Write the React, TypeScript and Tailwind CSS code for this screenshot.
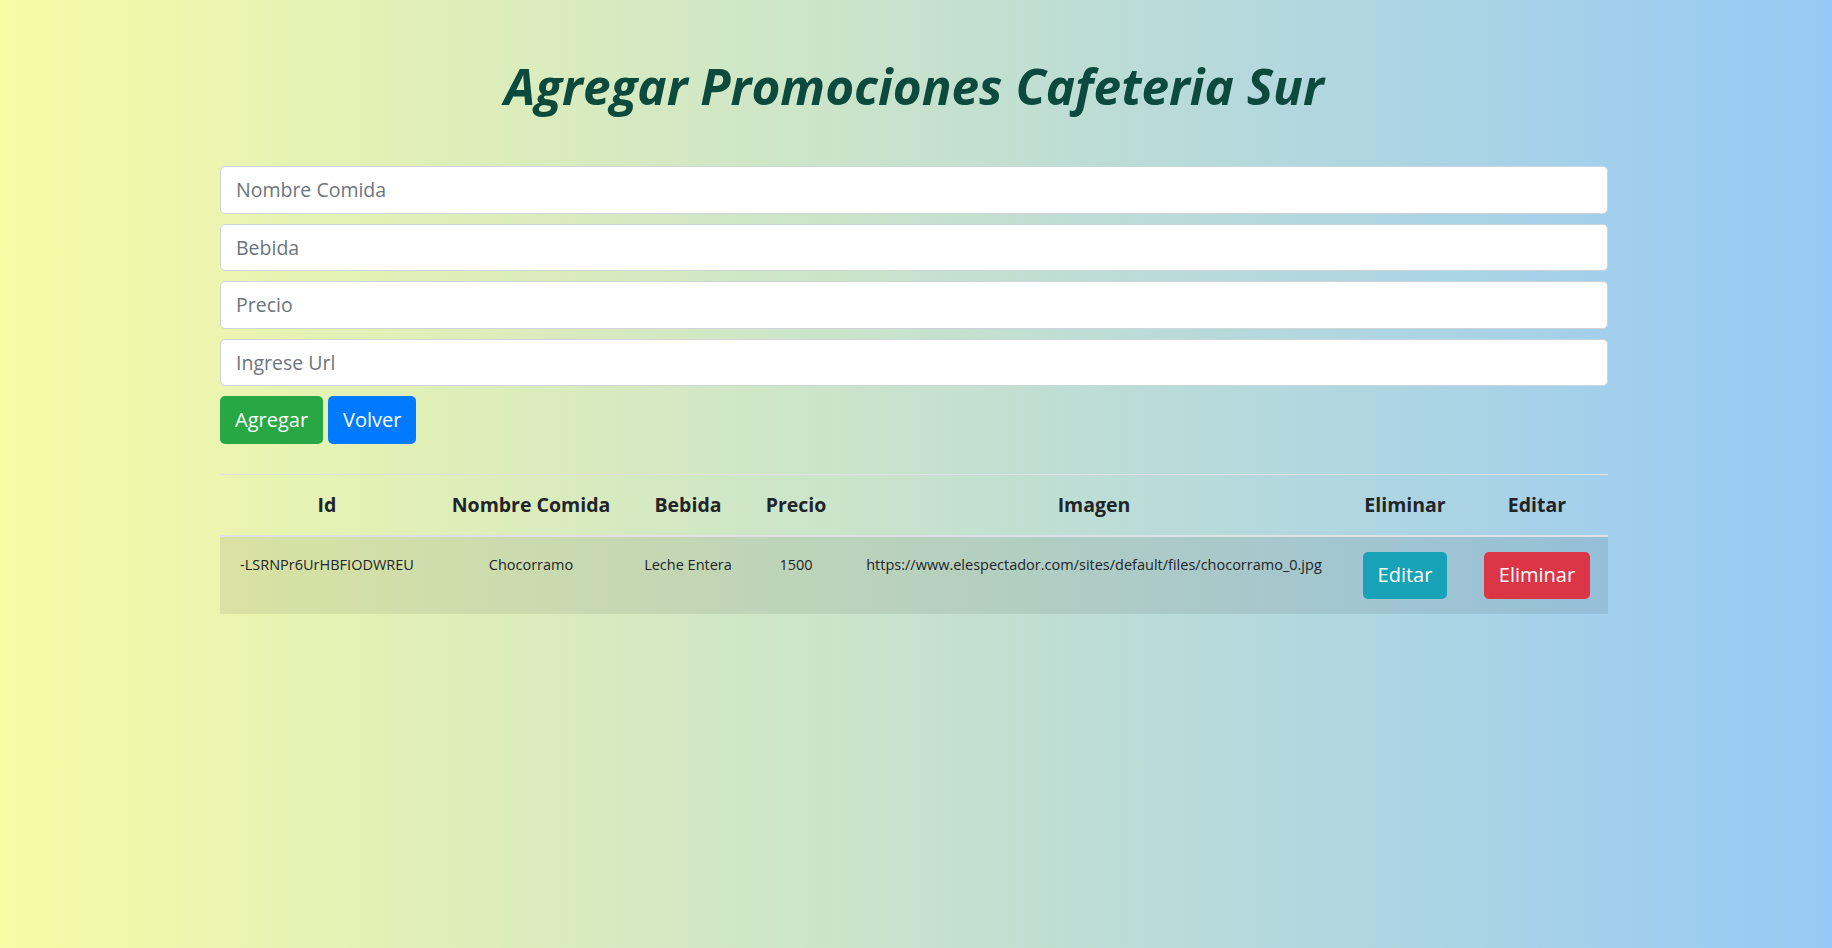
import React from "react";

const font = { fontFamily: '"Open Sans", "Noto Sans", sans-serif' };

export default function App() {
  const inputs = ["Nombre Comida", "Bebida", "Precio", "Ingrese Url"];
  return (
    <div
      className="min-h-[948px] w-full bg-[linear-gradient(to_right,#f7fba6,#96c9f5)] text-[#212529] font-['Open_Sans','Noto_Sans',sans-serif]"
      style={font}
    >
      <div className="ml-[220px] w-[1388px] pt-[56px]">
        <h1 className="h-[60px] text-center text-[49.5px] leading-[60px] font-bold italic text-[#0c4a3e]">
          Agregar Promociones Cafeteria Sur
        </h1>
        <div className="mt-[50px] flex flex-col gap-[10px]">
          {inputs.map((p) => (
            <input
              key={p}
              placeholder={p}
              className="h-[47.5px] w-full rounded-[5px] border border-[#ced4da] bg-white px-[15px] text-[19.5px] text-[#495057] placeholder:text-[#6c757d] outline-none"
            />
          ))}
        </div>
        <div className="mt-[10px] flex gap-[5px]">
          <button className="h-[47.5px] rounded-[5px] bg-[#28a745] px-[15px] text-[20px] text-white">
            Agregar
          </button>
          <button className="h-[47.5px] rounded-[5px] bg-[#007bff] px-[15px] text-[20px] text-white">
            Volver
          </button>
        </div>
        <table className="mt-[30px] w-full table-fixed border-collapse">
          <colgroup>
            <col className="w-[214px]" />
            <col className="w-[194px]" />
            <col className="w-[120px]" />
            <col className="w-[96px]" />
            <col className="w-[500px]" />
            <col className="w-[122px]" />
            <col className="w-[142px]" />
          </colgroup>
          <thead>
            <tr className="border-t border-[#dee2e6]">
              {["Id", "Nombre Comida", "Bebida", "Precio", "Imagen", "Eliminar", "Editar"].map((h) => (
                <th
                  key={h}
                  className="border-b-2 border-[#dee2e6] px-[15px] py-[15px] text-center text-[19.5px] leading-[30px] font-bold"
                >
                  {h}
                </th>
              ))}
            </tr>
          </thead>
          <tbody>
            <tr className="bg-black/[0.075]">
              {["-LSRNPr6UrHBFIODWREU", "Chocorramo", "Leche Entera", "1500", "https://www.elespectador.com/sites/default/files/chocorramo_0.jpg"].map((c) => (
                <td
                  key={c}
                  className="px-[15px] pt-[16px] pb-[15px] text-center align-top text-[14.5px] leading-6 whitespace-nowrap"
                >
                  {c}
                </td>
              ))}
              <td className="px-[15px] py-[15px] text-center align-top">
                <button className="h-[47.5px] rounded-[5px] bg-[#17a2b8] px-[15px] text-[20px] text-white">
                  Editar
                </button>
              </td>
              <td className="px-[15px] py-[15px] text-center align-top">
                <button className="h-[47.5px] rounded-[5px] bg-[#dc3545] px-[15px] text-[20px] text-white">
                  Eliminar
                </button>
              </td>
            </tr>
          </tbody>
        </table>
      </div>
    </div>
  );
}
